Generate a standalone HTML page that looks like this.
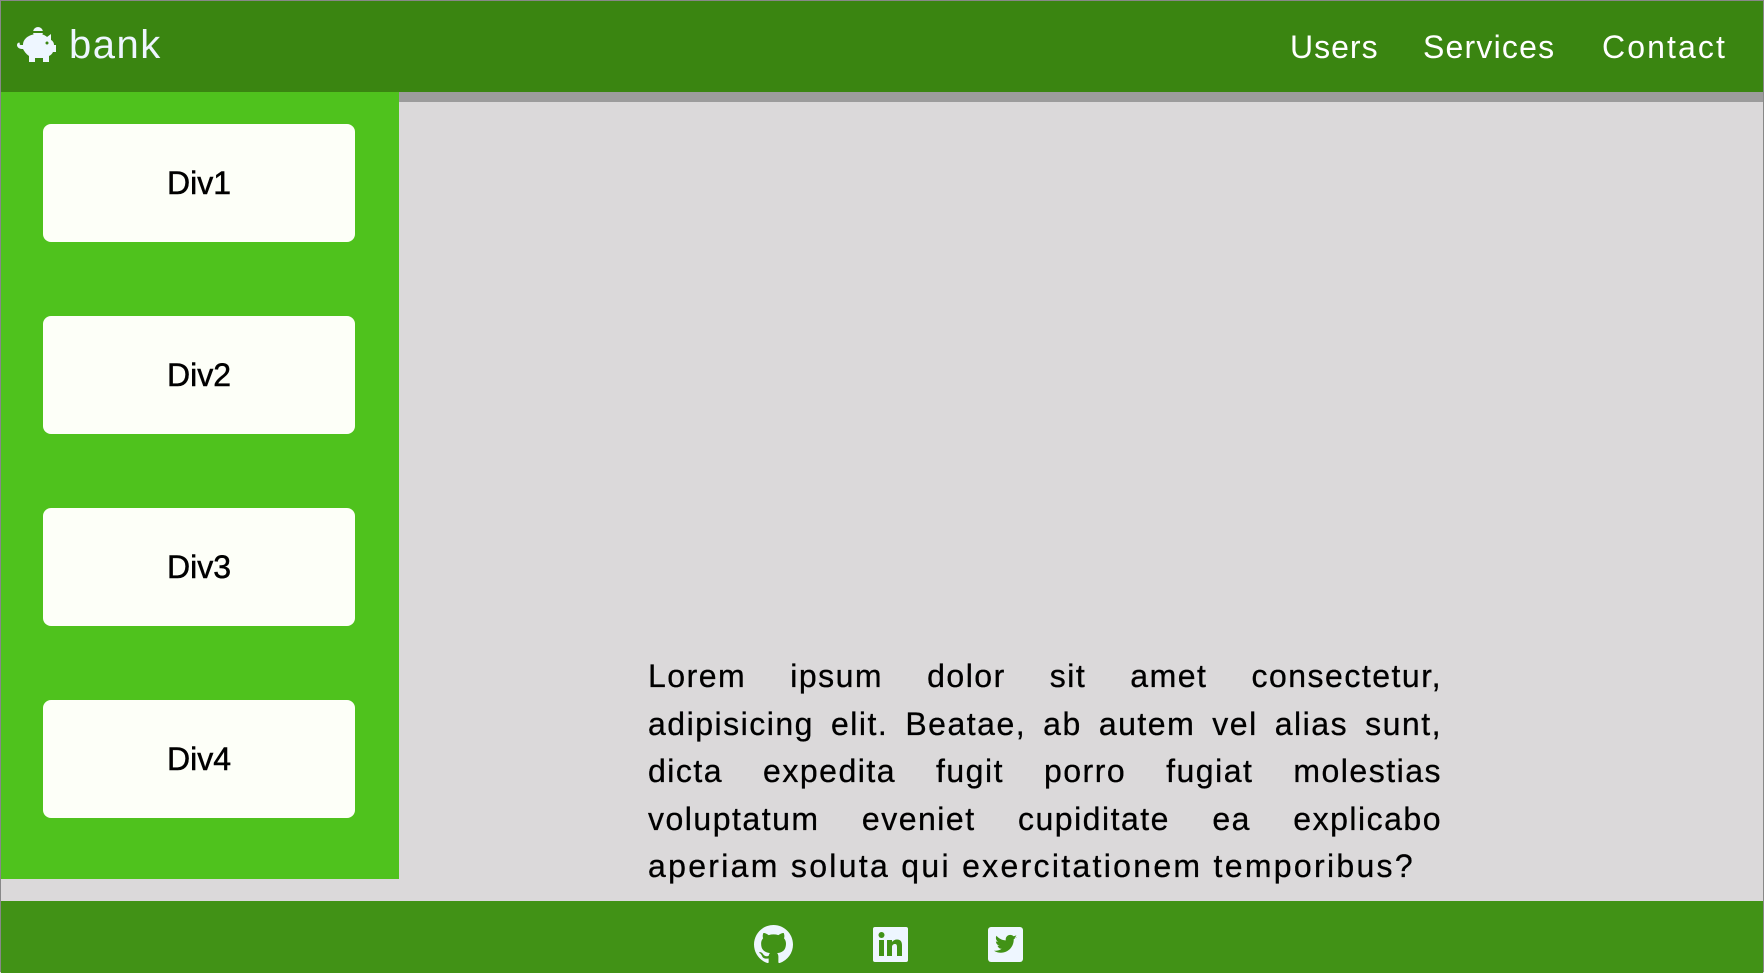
<!DOCTYPE html>
<html><head><meta charset="utf-8"><style>
*{margin:0;padding:0;box-sizing:border-box}
body{width:1764px;height:972px;overflow:hidden;background:#dbd9da;font-family:"Liberation Sans",sans-serif;position:relative;border:1px solid #888}
.hdr{position:absolute;left:0;top:0;width:1762px;height:91px;background:#3a8511}
.strip{position:absolute;left:398px;top:91px;width:1364px;height:10px;background:#9c9c9c}
.side{position:absolute;left:0;top:91px;width:398px;height:787px;background:#4fc21d}
.card{position:absolute;left:42px;width:312px;height:118px;background:#fdfff8;border-radius:8px;font-size:32px;color:#000;text-align:center;line-height:118px;-webkit-text-stroke:0.5px #000}
.nav{position:absolute;top:26px;color:#fff;font-size:32px;line-height:40px;letter-spacing:1px}
.foot{position:absolute;left:0;top:900px;width:1762px;height:72px;background:#419216}
.p{position:absolute;left:647px;top:652px;width:794px;font-size:32px;line-height:47.5px;color:#000;letter-spacing:1.5px;-webkit-text-stroke:0.3px #000}
.p div{text-align:justify;text-align-last:justify;white-space:nowrap}
.p div.l{text-align-last:left;letter-spacing:2.3px}
</style></head><body>
<div class="hdr">
<svg style="position:absolute;left:14px;top:24px" width="44" height="40" viewBox="0 0 44 40"><circle cx="23" cy="7" r="5" fill="#eef6ff"/><rect x="17" y="6" width="12" height="2" fill="#3a8511"/><path d="M8 20c0-7 7-11 15-11 4 0 7 1 9 3l4-3v6c2 1 3 3 3 5h2v7h-3c-1 2-2 3-4 4v6h-6v-4h-8v4h-6v-6c-3-2-5-5-6-7h-1c-3 0-5-2-5-4s2-3 3-2c-1 1 0 2 1 2h2z" fill="#eef6ff"/><circle cx="32" cy="18" r="1.5" fill="#3a8511"/></svg>
<div class="nav" style="left:68px;top:24px;font-size:40px;letter-spacing:1.5px;color:#eef6ff">bank</div>
<div class="nav" style="left:1289px">Users</div>
<div class="nav" style="left:1422px;letter-spacing:1.2px">Services</div>
<div class="nav" style="left:1601px;letter-spacing:2.1px">Contact</div>
</div>
<div class="strip"></div>
<div class="side">
<div class="card" style="top:32px">Div1</div>
<div class="card" style="top:224px">Div2</div>
<div class="card" style="top:416px">Div3</div>
<div class="card" style="top:608px">Div4</div>
</div>
<div class="p">
<div>Lorem ipsum dolor sit amet consectetur,</div>
<div>adipisicing elit. Beatae, ab autem vel alias sunt,</div>
<div>dicta expedita fugit porro fugiat molestias</div>
<div>voluptatum eveniet cupiditate ea explicabo</div>
<div class="l">aperiam soluta qui exercitationem temporibus?</div>
</div>
<div class="foot">
<svg style="position:absolute;left:753px;top:24px" width="39" height="39" viewBox="0 0 16 16"><path fill="#eef6ff" d="M8 0C3.58 0 0 3.58 0 8c0 3.54 2.29 6.53 5.47 7.59.4.07.55-.17.55-.38 0-.19-.01-.82-.01-1.49-2.01.37-2.53-.49-2.69-.94-.09-.23-.48-.94-.82-1.13-.28-.15-.68-.52-.01-.53.63-.01 1.08.58 1.23.82.72 1.21 1.87.87 2.33.66.07-.52.28-.87.51-1.07-1.78-.2-3.64-.89-3.64-3.95 0-.87.31-1.59.82-2.15-.08-.2-.36-1.02.08-2.12 0 0 .67-.21 2.2.82.64-.18 1.32-.27 2-.27.68 0 1.36.09 2 .27 1.53-1.04 2.2-.82 2.2-.82.44 1.1.16 1.92.08 2.12.51.56.82 1.27.82 2.15 0 3.07-1.87 3.75-3.65 3.95.29.25.54.73.54 1.48 0 1.07-.01 1.93-.01 2.2 0 .21.15.46.55.38A8.013 8.013 0 0 0 16 8c0-4.42-3.58-8-8-8z"/></svg>
<svg style="position:absolute;left:872px;top:26px" width="35" height="35" viewBox="0 0 35 35"><rect width="35" height="35" rx="2" fill="#eef6ff"/><rect x="6" y="13" width="5" height="16" fill="#419216"/><circle cx="8.5" cy="8" r="3" fill="#419216"/><path d="M14 13h5v2c1-1.5 3-2.5 5-2.5 4 0 5 2.5 5 6V29h-5v-9c0-2-.5-3-2-3s-3 1-3 3v9h-5z" fill="#419216"/></svg>
<svg style="position:absolute;left:987px;top:26px" width="35" height="35" viewBox="0 0 35 35"><rect width="35" height="35" rx="3" fill="#eef6ff"/><path fill="#419216" d="M29 10c-.8.4-1.7.6-2.6.7.9-.6 1.6-1.4 2-2.5-.9.5-1.9.9-2.9 1.1-.8-.9-2-1.4-3.300-1.4-2.5 0-4.5 2-4.5 4.5 0 .4 0 .7.1 1-3.8-.2-7.1-2-9.3-4.7-.4.7-.6 1.4-.6 2.3 0 1.6.8 2.9 2 3.8-.7 0-1.4-.2-2-.6 0 2.2 1.6 4 3.6 4.4-.4.1-.8.2-1.2.2-.3 0-.6 0-.8-.1.6 1.8 2.2 3.1 4.2 3.1-1.5 1.2-3.5 1.9-5.6 1.9H6c2 1.3 4.4 2 6.9 2 8.3 0 12.8-6.9 12.8-12.8v-.6c.9-.6 1.7-1.4 2.3-2.300z"/></svg>
</div>
</body></html>
